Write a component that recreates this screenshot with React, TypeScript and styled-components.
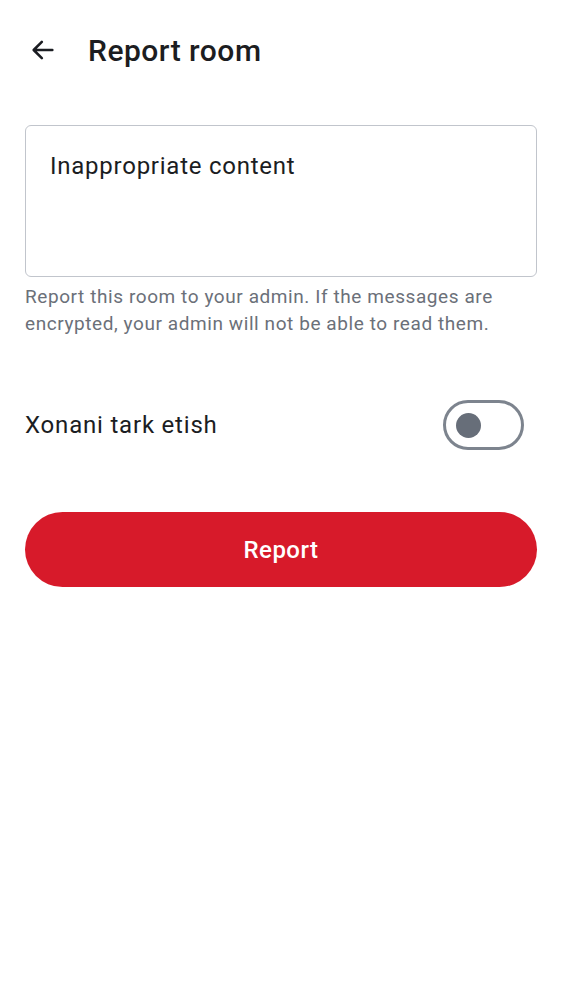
import React, { useState } from "react";
import styled, { createGlobalStyle } from "styled-components";

const GlobalStyle = createGlobalStyle`
  html, body {
    margin: 0;
    padding: 0;
    background: #ffffff;
    font-family: Roboto, "Noto Sans", sans-serif;
    color: #1b1d22;
  }
`;

const Page = styled.div`
  width: 562px;
  min-height: 1000px;
  background: #ffffff;
`;

const Header = styled.header`
  display: flex;
  align-items: center;
  height: 100px;
  padding-left: 28px;
  box-sizing: border-box;
`;

const BackButton = styled.button`
  display: flex;
  align-items: center;
  justify-content: center;
  width: 30px;
  height: 30px;
  padding: 0;
  margin-right: 30px;
  border: none;
  background: none;
  color: #1b1d22;
`;

const Title = styled.h1`
  margin: 0;
  font-size: 30px;
  font-weight: 500;
  letter-spacing: 0.5px;
  color: #1c1d21;
`;

const Content = styled.main`
  display: flex;
  flex-direction: column;
  padding: 25px 25px 0;
`;

const ReasonBox = styled.textarea`
  box-sizing: border-box;
  width: 512px;
  height: 152px;
  padding: 25px 24px;
  border: 1.5px solid #c1c5cc;
  border-radius: 6px;
  resize: none;
  font-family: Roboto, "Noto Sans", sans-serif;
  font-size: 24px;
  line-height: 30px;
  letter-spacing: 0.75px;
  color: #1b1d22;
  outline: none;
`;

const Helper = styled.p`
  margin: 6px 0 0;
  font-size: 19px;
  line-height: 27px;
  letter-spacing: 0.58px;
  color: #6b7079;
`;

const ToggleRow = styled.div`
  display: flex;
  align-items: center;
  justify-content: space-between;
  margin-top: 63px;
  padding-right: 13px;
`;

const ToggleLabel = styled.span`
  font-size: 24px;
  letter-spacing: 0.8px;
  color: #1b1d22;
`;

const Switch = styled.button<{ $on: boolean }>`
  position: relative;
  box-sizing: border-box;
  width: 81px;
  height: 50px;
  padding: 0;
  border-radius: 25px;
  border: 3px solid ${(p) => (p.$on ? "#d71a2a" : "#7d848e")};
  background: ${(p) => (p.$on ? "#d71a2a" : "#ffffff")};
  cursor: pointer;
`;

const Knob = styled.span<{ $on: boolean }>`
  position: absolute;
  top: 50%;
  left: ${(p) => (p.$on ? "40px" : "10px")};
  width: 25px;
  height: 25px;
  margin-top: -12.5px;
  border-radius: 50%;
  background: ${(p) => (p.$on ? "#ffffff" : "#676e79")};
`;

const ReportButton = styled.button`
  margin-top: 62px;
  width: 512px;
  height: 75px;
  border: none;
  border-radius: 38px;
  background: #d71a2a;
  color: #ffffff;
  font-family: Roboto, "Noto Sans", sans-serif;
  font-size: 24px;
  font-weight: 500;
  letter-spacing: 0.5px;
  cursor: pointer;
`;

function App() {
  const [leave, setLeave] = useState(false);
  return (
    <Page>
      <GlobalStyle />
      <Header>
        <BackButton aria-label="Back">
          <svg width="28" height="28" viewBox="0 0 24 24" fill="none">
            <path
              d="M20 12H4.5M11 5l-7 7 7 7"
              stroke="currentColor"
              strokeWidth="2.2"
              strokeLinecap="round"
              strokeLinejoin="round"
            />
          </svg>
        </BackButton>
        <Title>Report room</Title>
      </Header>
      <Content>
        <ReasonBox defaultValue="Inappropriate content" />
        <Helper>
          Report this room to your admin. If the messages are encrypted, your
          admin will not be able to read them.
        </Helper>
        <ToggleRow>
          <ToggleLabel>Xonani tark etish</ToggleLabel>
          <Switch $on={leave} onClick={() => setLeave(!leave)}>
            <Knob $on={leave} />
          </Switch>
        </ToggleRow>
        <ReportButton>Report</ReportButton>
      </Content>
    </Page>
  );
}

export default App;
